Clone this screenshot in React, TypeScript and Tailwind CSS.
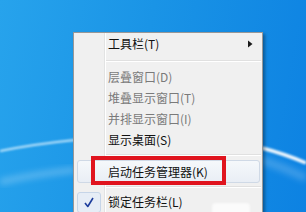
import React from "react";

const font = { fontFamily: '"Noto Sans CJK SC", "Microsoft YaHei", sans-serif' };

function Gutter({ children }: { children?: React.ReactNode }) {
  return (
    <div className="w-[31px] h-full shrink-0 border-r border-[#e2e3e3] flex items-center justify-center">
      {children}
    </div>
  );
}

function Item({ label, disabled, arrow, h = "h-[21px]" }: { label: string; disabled?: boolean; arrow?: boolean; h?: string }) {
  return (
    <div className={`flex items-stretch ${h}`}>
      <Gutter />
      <div className={`flex-1 flex items-center border-l border-white pl-[2px] text-[12px] ${disabled ? "text-[#7a7a7a]" : "text-[#111]"}`}>
        <span className="leading-none">{label}</span>
        {arrow && (
          <svg className="ml-auto mr-[9px]" width="5" height="8" viewBox="0 0 5 8">
            <path d="M0 0.5 L4.5 4 L0 7.5 Z" fill="#1a1a1a" />
          </svg>
        )}
      </div>
    </div>
  );
}

function Sep({ h }: { h: string }) {
  return (
    <div className={`flex items-stretch ${h}`}>
      <Gutter />
      <div className="flex-1 flex items-center border-l border-white pr-[1px]">
        <div className="w-full h-[2px] border-t border-[#e0e0e0] border-b border-b-white" />
      </div>
    </div>
  );
}

export default function App() {
  return (
    <div
      className="relative w-[306px] h-[212px] overflow-hidden bg-[linear-gradient(100deg,#27a3ec_0%,#1a94e6_45%,#0d82e2_100%)]"
      style={font}
    >
      <svg className="absolute inset-0" width="306" height="212" viewBox="0 0 306 212">
        <defs>
          <filter id="b1" x="-10%" y="-50%" width="120%" height="200%">
            <feGaussianBlur stdDeviation="0.8" />
          </filter>
          <filter id="b2" x="-10%" y="-50%" width="120%" height="200%">
            <feGaussianBlur stdDeviation="3" />
          </filter>
        </defs>
        <path d="M0 151 Q35 144 75 140" stroke="#dff3ff" strokeWidth="2" fill="none" opacity="0.85" filter="url(#b1)" />
        <path d="M0 182 Q35 174 75 170" stroke="#ffffff" strokeWidth="6" fill="none" opacity="0.25" filter="url(#b2)" />
        <path d="M262 148 Q285 154 306 163" stroke="#ffffff" strokeWidth="3.5" fill="none" opacity="0.95" filter="url(#b1)" />
        <path d="M262 160 Q285 168 306 178" stroke="#ffffff" strokeWidth="8" fill="none" opacity="0.2" filter="url(#b2)" />
      </svg>

      <div className="absolute left-[73px] top-[32px] w-[190px] h-[190px] bg-[#f0f0f0] border border-[#979797] shadow-[2px_2px_3px_rgba(0,0,0,0.35)] flex flex-col">
        <Item label="工具栏(T)" arrow h="h-[22px]" />
        <Sep h="h-[11px]" />
        <Item label="层叠窗口(D)" disabled />
        <Item label="堆叠显示窗口(T)" disabled />
        <Item label="并排显示窗口(I)" disabled />
        <Item label="显示桌面(S)" />
        <Sep h="h-[10px]" />
        <div className="h-[23px] flex">
          <div className="flex-1 ml-[3px] mr-[2px] rounded-[3px] border border-[#cfd9e6] bg-[linear-gradient(#f5f8fb,#e9eef5)] flex items-center pl-[30px] text-[12px] text-[#111]">
            <span className="leading-none">启动任务管理器(K)</span>
          </div>
        </div>
        <Sep h="h-[8px]" />
        <div className="flex items-stretch h-[22px]">
          <div className="w-[31px] h-full shrink-0 border-r border-[#e2e3e3] pl-[3px] pt-[1px] pr-[3px]">
            <div className="w-full h-full rounded-[3px] border border-[#c6d5e8] bg-[#e6edf6] flex items-center justify-center">
              <svg width="10" height="11" viewBox="0 0 10 11">
                <path d="M1 6 L3.8 9.5 L9 1" stroke="#1d3d9c" strokeWidth="1.6" fill="none" strokeLinejoin="round" />
              </svg>
            </div>
          </div>
          <div className="flex-1 flex items-center border-l border-white pl-[2px] text-[12px] text-[#111]">
            <span className="leading-none">锁定任务栏(L)</span>
          </div>
        </div>
      </div>

      <div className="absolute left-[91px] top-[156px] w-[135px] h-[29px] border-4 border-[#e0141e]" />
      <div className="absolute left-[212px] top-[203px] w-[38px] h-[14px] rounded-[4px] bg-white/70 blur-[1px]" />
    </div>
  );
}
